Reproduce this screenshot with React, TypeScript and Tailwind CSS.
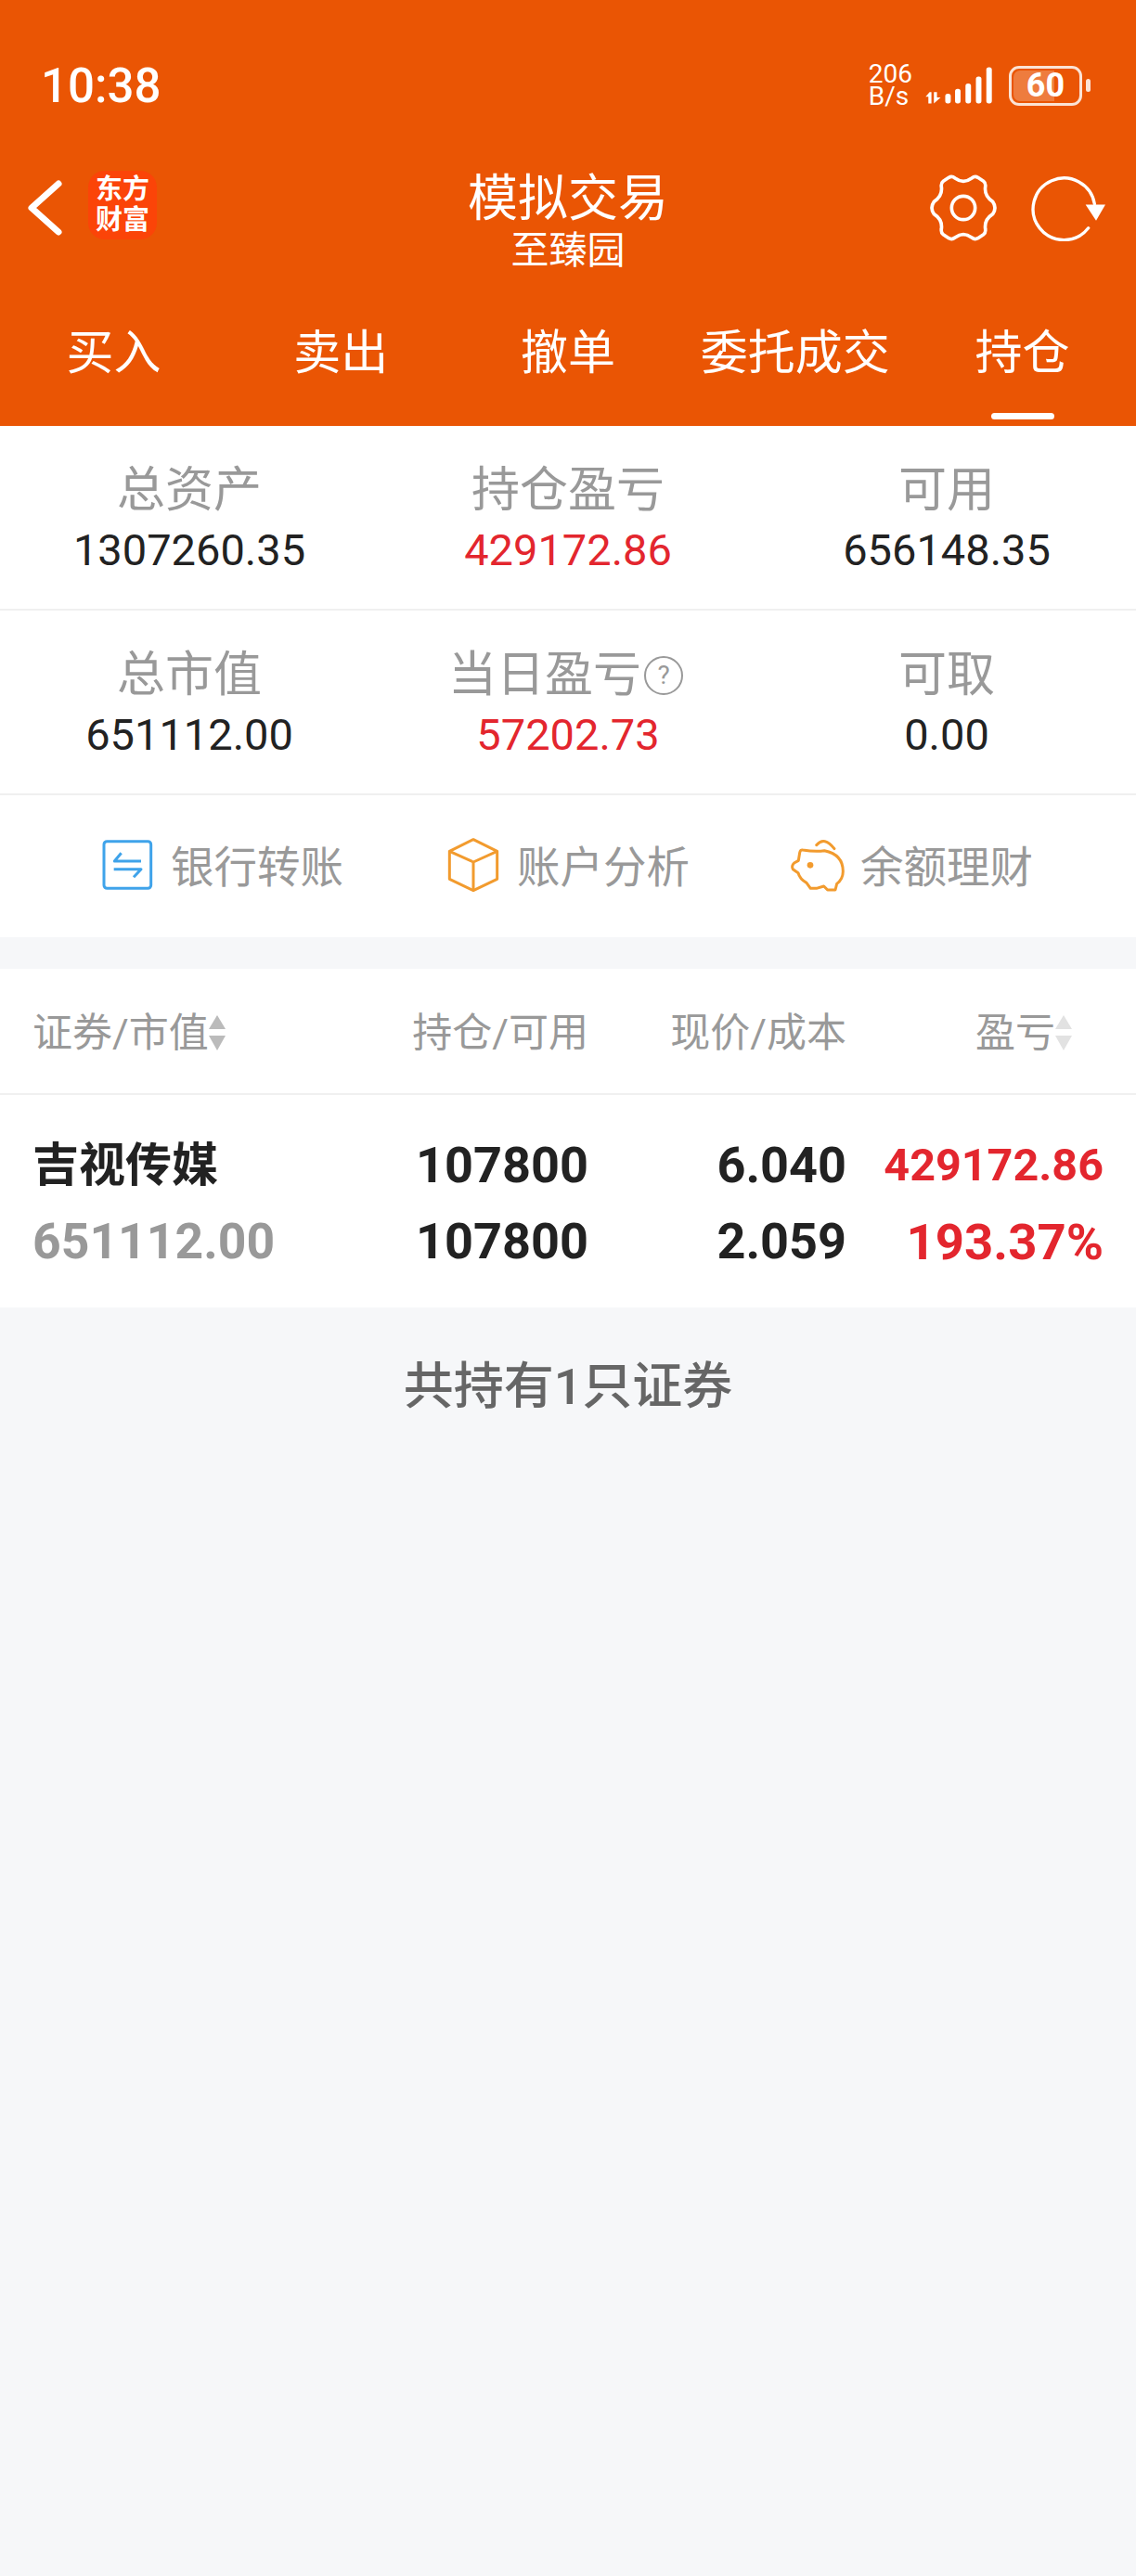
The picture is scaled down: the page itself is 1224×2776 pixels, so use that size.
const CJK = 'font-["Roboto","Noto_Sans_CJK_SC",sans-serif]';

function SortArrows({ color }: { color: string }) {
  return (
    <svg width="18" height="38" viewBox="0 0 18 38" className="shrink-0" fill={color}>
      <polygon points="9,0 18,15 0,15" />
      <polygon points="0,22 18,22 9,38" />
    </svg>
  );
}

function GearIcon() {
  return (
    <svg width="74" height="72" viewBox="0 0 222 216" fill="none" stroke="white" strokeWidth="11" strokeLinejoin="round">
      <path d="M84 12Q111 32 138 12Q148 4 158 10L176 22Q184 28 182 40Q178 70 206 88Q220 108 206 128Q178 146 182 176Q184 188 176 194L158 206Q148 212 138 204Q111 184 84 204Q74 212 64 206L46 194Q38 188 40 176Q44 146 16 128Q2 108 16 88Q44 70 40 40Q38 28 46 22L64 10Q74 4 84 12Z" />
      <circle cx="111" cy="108" r="38" />
    </svg>
  );
}

function RefreshIcon() {
  return (
    <svg width="80" height="72" viewBox="690 445 240 215" fill="none">
      <path d="M875 618A100 100 0 1 1 895 540" stroke="white" strokeWidth="10" strokeLinecap="round" />
      <polygon points="866,542 930,542 900,594" fill="white" />
    </svg>
  );
}

function SignalIcon() {
  return (
    <svg width="76" height="42" viewBox="350 90 230 126" fill="white">
      <path d="M370 175L357 190H366V212H376V175Z" />
      <path d="M384 175V212L406 192H394V175Z" />
      <rect x="421" y="180" width="18" height="32" rx="8" />
      <rect x="453" y="164" width="18" height="48" rx="8" />
      <rect x="487" y="147" width="18" height="65" rx="8" />
      <rect x="521" y="124" width="18" height="88" rx="8" />
      <rect x="555" y="94" width="18" height="118" rx="8" />
    </svg>
  );
}

function BankIcon() {
  return (
    <svg width="80" height="80" viewBox="0 0 240 240" fill="none" stroke="#3fa3ea" strokeWidth="9" strokeLinejoin="round">
      <rect x="36" y="38" width="152" height="152" rx="10" />
      <path d="M92 76L70 102H156" />
      <path d="M68 128H156L132 154" />
    </svg>
  );
}

function CubeIcon() {
  return (
    <svg width="80" height="80" viewBox="0 0 240 240" fill="none" stroke="#f29b2e" strokeWidth="9" strokeLinejoin="round">
      <polygon points="105,32 182,70 182,160 105,197 28,160 28,70" />
      <path d="M28 70L105 105L182 70M105 105V197" />
    </svg>
  );
}

function PigIcon() {
  return (
    <svg width="80" height="80" viewBox="0 0 240 240" fill="none" stroke="#f29b2e" strokeWidth="9" strokeLinejoin="round" strokeLinecap="round">
      <path d="M104 50Q130 20 162 62" />
      <path d="M60 66Q100 72 130 68Q190 80 190 135Q190 160 170 175L165 195H140L128 183L104 190H85L72 172Q50 160 45 140L28 128Q22 118 32 108L46 100L50 75Q52 64 60 66Z" />
      <circle cx="84" cy="115" r="10" fill="#f29b2e" stroke="none" />
    </svg>
  );
}

const TABS = ['买入', '卖出', '撤单', '委托成交', '持仓'];

const STATS = [
  [
    { label: '总资产', value: '1307260.35' },
    { label: '持仓盈亏', value: '429172.86', red: true },
    { label: '可用', value: '656148.35' },
  ],
  [
    { label: '总市值', value: '651112.00' },
    { label: '当日盈亏', value: '57202.73', red: true, help: true },
    { label: '可取', value: '0.00' },
  ],
];

const ACTIONS = [
  { label: '银行转账', icon: <BankIcon />, gap: 'ml-[4px]' },
  { label: '账户分析', icon: <CubeIcon />, gap: 'ml-[2px]' },
  { label: '余额理财', icon: <PigIcon />, gap: 'ml-[2px]' },
];

export default function App() {
  return (
    <div className={`h-[2776px] w-[1224px] bg-[#f6f7f9] ${CJK}`}>
      <header className="h-[459px] bg-[#ea5504] text-white">
        {/* status bar */}
        <div className="flex h-[184px] items-center justify-between pl-[44px] pr-[49px]">
          <span className="text-[51px] font-medium leading-none">10:38</span>
          <div className="flex items-center">
            <div className="mr-[12px] flex flex-col text-[28px] leading-[24px]">
              <span>206</span>
              <span>B/s</span>
            </div>
            <SignalIcon />
            <div className="relative ml-[16px] flex h-[43px] w-[79px] items-center justify-center overflow-hidden rounded-[11px] border-[3px] border-[#fbe3d5]">
              <div className="absolute inset-y-[2px] left-[2px] w-[44px] rounded-l-[7px] bg-[#ee7c3e]" />
              <span className="relative text-[36px] font-bold leading-none">60</span>
            </div>
            <div className="ml-[4px] h-[14px] w-[5px] rounded-full bg-[#fbe3d5]" />
          </div>
        </div>

        {/* title */}
        <div className="grid h-[112px] grid-cols-[1fr_auto_1fr]">
          <div className="flex h-[80px] items-center pl-[28px]">
            <svg width="42" height="64" viewBox="0 0 42 64" fill="none" stroke="white" strokeWidth="7" strokeLinecap="round" strokeLinejoin="round">
              <path d="M35 6L6 32L35 58" />
            </svg>
            <div className="ml-[25px] mt-[-6px] flex h-[74px] w-[74px] flex-col items-center justify-center rounded-[18px] bg-[#fb4408] text-[29px] font-bold leading-[33px]">
              <span>东方</span>
              <span>财富</span>
            </div>
          </div>
          <div className="flex flex-col items-center pt-[3px]">
            <span className="text-[54px] leading-[56px]">模拟交易</span>
            <span className="text-[41px] leading-[55px]">至臻园</span>
          </div>
          <div className="flex h-[80px] items-center justify-end pr-[33px]">
            <GearIcon />
            <div className="ml-[36px]">
              <RefreshIcon />
            </div>
          </div>
        </div>

        {/* tabs */}
        <nav className="grid grid-cols-5 pt-[49px]">
          {TABS.map((t, i) => (
            <div key={t} className="flex flex-col items-center">
              <span className="text-[51px] leading-[72px]">{t}</span>
              {i === 4 && <div className="mt-[28px] h-[7px] w-[68px] rounded-full bg-white" />}
            </div>
          ))}
        </nav>
      </header>

      <section className="bg-white">
        {STATS.map((row, i) => (
          <div key={i} className="grid h-[199px] grid-cols-3 border-b-2 border-[#f0f0f0] pt-[40px]">
            {row.map(s => (
              <div key={s.label} className="flex flex-col items-center">
                <div className="flex items-center text-[52px] leading-[60px] text-[#999999]">
                  {s.label}
                  {s.help && (
                    <span className="ml-[3px] mr-[5px] flex h-[42px] w-[42px] items-center justify-center rounded-full border-2 border-[#999999] text-[28px] leading-none">?</span>
                  )}
                </div>
                <div className={`text-[47px] leading-[68px] ${s.red ? 'text-[#e3262e]' : 'text-[#222222]'}`}>{s.value}</div>
              </div>
            ))}
          </div>
        ))}
        <div className="grid h-[153px] grid-cols-[375px_370px_1fr] items-center pl-[100px]">
          {ACTIONS.map(a => (
            <div key={a.label} className="flex items-center">
              {a.icon}
              <span className={`${a.gap} pt-[3px] text-[46.5px] leading-none text-[#999999]`}>{a.label}</span>
            </div>
          ))}
        </div>
      </section>

      <section className="mt-[34px] bg-white">
        <div className="grid h-[136px] grid-cols-[321px_278px_278px_276px] items-center border-b-2 border-[#f0f0f0] pl-[35px] pt-[4px] text-[43px] text-[#999999]">
          <div className="flex items-center">
            证券/市值
            <SortArrows color="#bbbbbb" />
          </div>
          <div className="text-right">持仓/可用</div>
          <div className="text-right">现价/成本</div>
          <div className="flex items-center justify-end pr-[33px]">
            盈亏
            <SortArrows color="#e2e2e2" />
          </div>
        </div>
        <div className="grid h-[229px] grid-cols-[321px_278px_278px_277px] content-center pl-[35px] pt-[4px] font-bold leading-[82px] text-[#222222]">
          <div className="text-[50px]">吉视传媒</div>
          <div className="text-right text-[54px]">107800</div>
          <div className="text-right text-[54px]">6.040</div>
          <div className="text-right text-[48.5px] text-[#e3262e]">429172.86</div>
          <div className="text-[53.5px] text-[#999999]">651112.00</div>
          <div className="text-right text-[54px]">107800</div>
          <div className="text-right text-[54px]">2.059</div>
          <div className="text-right text-[54.5px] text-[#e3262e]">193.37%</div>
        </div>
      </section>

      <div className="pt-[50px] text-center text-[54px] font-medium leading-[72px] text-[#666666]">共持有1只证券</div>
    </div>
  );
}
